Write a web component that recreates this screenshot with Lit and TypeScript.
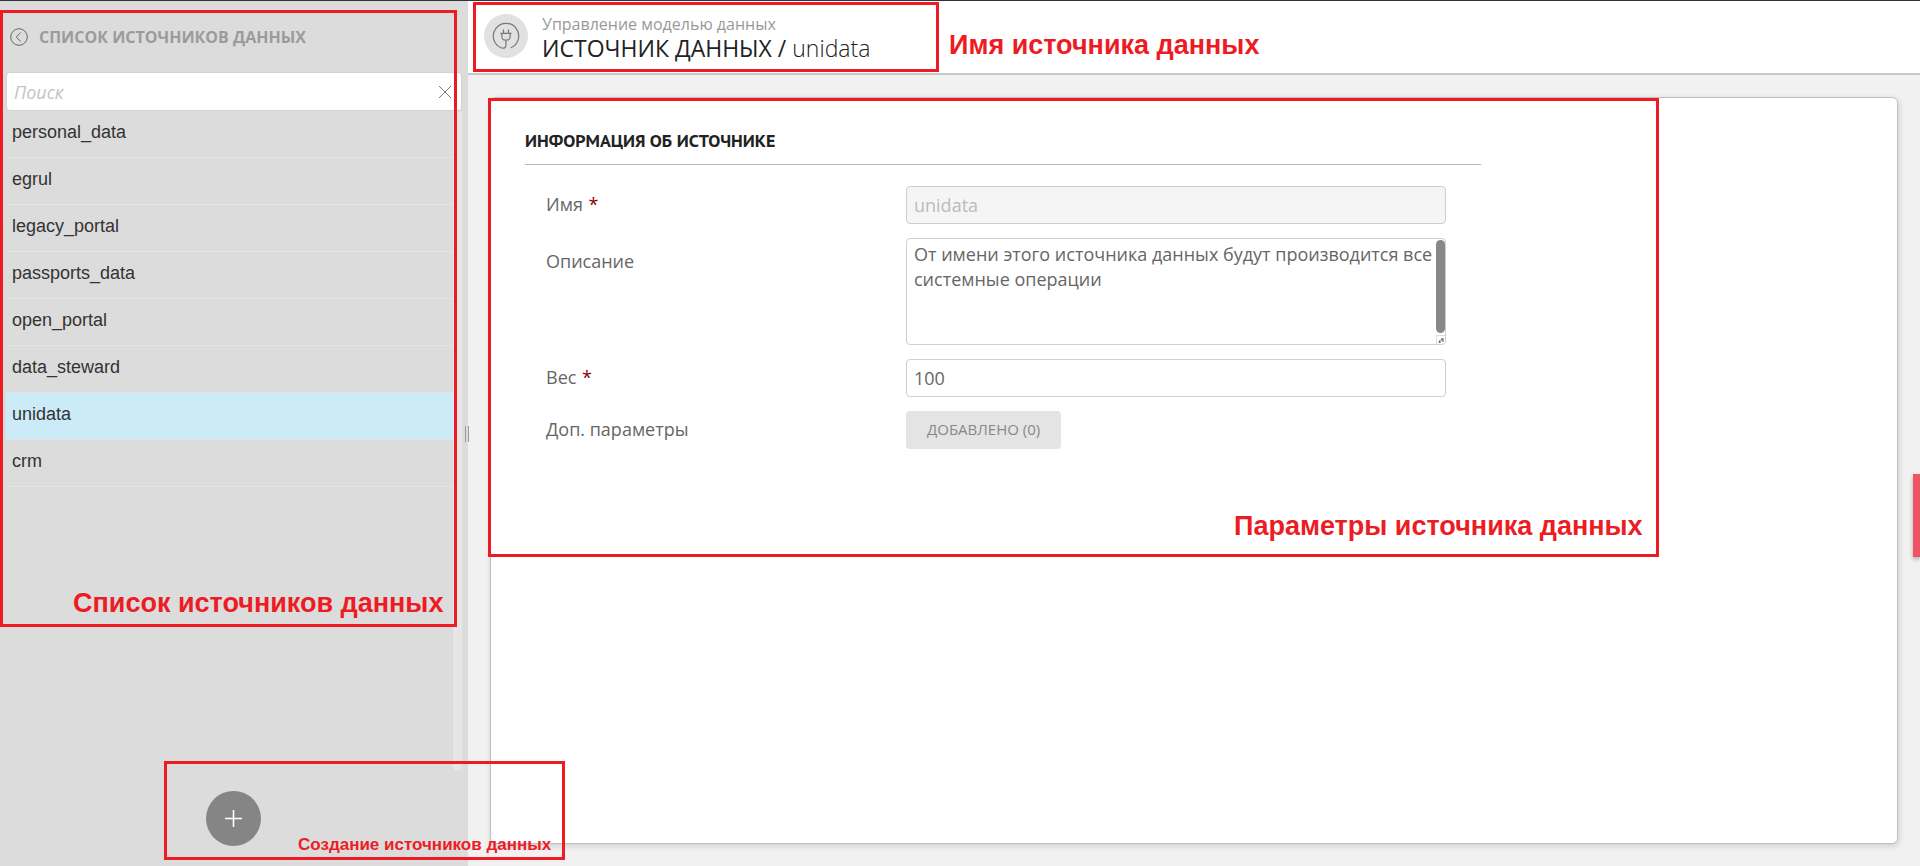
import { LitElement, html, css } from "lit";
import { customElement, state } from "lit/decorators.js";
import { classMap } from "lit/directives/class-map.js";

@customElement("source-list")
class SourceList extends LitElement {
  @state() private selected = "unidata";
  private items = [
    "personal_data",
    "egrul",
    "legacy_portal",
    "passports_data",
    "open_portal",
    "data_steward",
    "unidata",
    "crm",
  ];

  static styles = css`
    :host {
      display: flex;
      flex-direction: column;
      position: relative;
      box-sizing: border-box;
      background: #dcdcdc;
      font-family: "Open Sans", sans-serif;
    }
    button {
      font: inherit;
      border: 0;
      padding: 0;
      background: none;
      cursor: pointer;
    }
    .head {
      display: flex;
      align-items: center;
      gap: 11px;
      height: 71px;
      padding: 0 10px;
      box-sizing: border-box;
    }
    .back {
      display: flex;
      width: 18px;
      height: 18px;
    }
    h2 {
      margin: 0;
      font-size: 16px;
      line-height: 24px;
      font-weight: 700;
      color: #9b9b9b;
    }
    .search {
      display: flex;
      align-items: center;
      height: 39px;
      margin: 0 6px;
      padding: 0 10px 0 7px;
      box-sizing: border-box;
      background: #fff;
      border: 1px solid #d2d2d2;
      border-radius: 4px;
    }
    .search input {
      flex: 1;
      min-width: 0;
      border: 0;
      padding: 0;
      outline: 0;
      background: none;
      font: 18px "Open Sans", sans-serif;
      color: #666;
    }
    .search input::placeholder {
      font-style: italic;
      font-weight: 400;
      color: #c4c4c4;
    }
    .scroll {
      flex: 1;
      display: flex;
      min-height: 0;
      margin: 0 6px;
    }
    ul {
      flex: 1;
      list-style: none;
      margin: 0;
      padding: 0;
    }
    .item {
      display: block;
      width: 100%;
      height: 47px;
      padding: 0 6px 4px;
      box-sizing: border-box;
      border-bottom: 1px solid #e4e4e4;
      text-align: left;
      font-family: "Liberation Sans", sans-serif;
      font-size: 18px;
      line-height: 42px;
      color: #333;
    }
    .item.active {
      background: #cbebf8;
    }
    .track {
      width: 9px;
      border-radius: 5px;
      background: #e6e6e6;
    }
    .foot {
      display: flex;
      justify-content: center;
      padding: 20px 2px 20px 0;
    }
    .add {
      display: flex;
      align-items: center;
      justify-content: center;
      width: 55px;
      height: 55px;
      border-radius: 50%;
      background: #858585;
    }
    .grip {
      position: absolute;
      right: -1px;
      top: 50%;
      width: 2px;
      height: 16px;
      margin-top: -8px;
      border: solid #999;
      border-width: 0 1px;
      z-index: 2;
    }
  `;

  render() {
    return html`
      <div class="head">
        <button class="back" aria-label="Назад">
          <svg width="18" height="18" viewBox="0 0 18 18" fill="none" stroke="#666">
            <circle cx="9" cy="9" r="8.3" />
            <path d="M10.7 4.6 6.2 9l4.5 4.4" />
          </svg>
        </button>
        <h2>СПИСОК ИСТОЧНИКОВ ДАННЫХ</h2>
      </div>
      <div class="search">
        <input type="text" placeholder="Поиск" aria-label="Поиск" />
        <button aria-label="Очистить">
          <svg width="12" height="12" viewBox="0 0 12 12" stroke="#777" display="block">
            <path d="M0 0 12 12M12 0 0 12" />
          </svg>
        </button>
      </div>
      <div class="scroll">
        <ul>
          ${this.items.map(
            (name) => html`<li>
              <button
                class=${classMap({ item: true, active: name === this.selected })}
                @click=${() => (this.selected = name)}
              >
                ${name}
              </button>
            </li>`
          )}
        </ul>
        <div class="track"></div>
      </div>
      <div class="foot">
        <button class="add" aria-label="Добавить">
          <svg width="17" height="17" viewBox="0 0 17 17" stroke="#fff" stroke-width="1.6">
            <path d="M8.5 0v17M0 8.5h17" />
          </svg>
        </button>
      </div>
      <div class="grip"></div>
    `;
  }
}

@customElement("source-form")
class SourceForm extends LitElement {
  static styles = css`
    :host {
      display: block;
      box-sizing: border-box;
      padding: 27px 34px;
      background: #fff;
      border: 1px solid #c0c0c0;
      border-radius: 6px;
      box-shadow: 1px 2px 6px rgba(0, 0, 0, 0.15);
      font-family: "Open Sans", sans-serif;
      font-size: 18px;
      color: #666;
    }
    .section {
      max-width: 956px;
    }
    h3 {
      margin: 0;
      padding: 2px 0 9px;
      border-bottom: 1px solid #b9b9b9;
      font: 700 18px/28px "PT Sans", Roboto, sans-serif;
      color: #222;
    }
    form {
      display: grid;
      grid-template-columns: 2fr 3fr;
      row-gap: 14px;
      padding: 21px 35px 0 21px;
    }
    label {
      line-height: 36px;
    }
    label.tall {
      padding-top: 5px;
    }
    .req {
      margin-left: 1px;
      color: #8b0000;
    }
    input,
    textarea,
    .params {
      box-sizing: border-box;
      margin: 0;
      font: inherit;
      color: inherit;
      border-radius: 4px;
    }
    input,
    textarea {
      display: block;
      width: 100%;
      border: 1px solid #cfcfcf;
      background: #fff;
      outline: 0;
    }
    input {
      height: 38px;
      padding: 0 7px;
    }
    input:disabled {
      background: #f5f5f5;
      color: #bbb;
    }
    .area {
      position: relative;
    }
    textarea {
      height: 107px;
      padding: 3px 9px 3px 7px;
      line-height: 25px;
      overflow: hidden;
      resize: none;
    }
    .thumb {
      position: absolute;
      right: 1px;
      top: 2px;
      bottom: 12px;
      width: 9px;
      border-radius: 5px;
      background: #888;
    }
    .corner {
      position: absolute;
      right: 1px;
      bottom: 1px;
      width: 9px;
      height: 9px;
      display: block;
    }
    .params {
      justify-self: start;
      height: 38px;
      padding: 0 21px 2px;
      border: 0;
      background: #e4e4e4;
      font-size: 15px;
      color: #888;
      cursor: pointer;
    }
  `;

  render() {
    return html`
      <div class="section">
        <h3>ИНФОРМАЦИЯ ОБ ИСТОЧНИКЕ</h3>
        <form>
          <label for="name">Имя <span class="req">*</span></label>
          <input id="name" type="text" value="unidata" disabled />
          <label class="tall" for="desc">Описание</label>
          <div class="area">
            <textarea
              id="desc"
              .value=${"От имени этого источника данных будут производится все системные операции"}
            ></textarea>
            <div class="thumb"></div>
            <svg class="corner" viewBox="0 0 9 9" fill="none">
              <path d="M.5 9V.5H9" stroke="#dcdcdc" />
              <path d="M3 7.5 7 3.5M3.5 5.5v2h1M5 4h2v3" stroke="#555" />
            </svg>
          </div>
          <label for="weight">Вес <span class="req">*</span></label>
          <input id="weight" type="text" value="100" />
          <label for="params">Доп. параметры</label>
          <button id="params" class="params" type="button">ДОБАВЛЕНО (0)</button>
        </form>
      </div>
    `;
  }
}

@customElement("app-root")
class AppRoot extends LitElement {
  static styles = css`
    :host {
      display: flex;
      flex-direction: column;
      position: relative;
      box-sizing: border-box;
      min-height: 100vh;
      overflow: hidden;
      border-top: 1px solid #333;
      background: #f1f1f1;
      font-family: "Open Sans", sans-serif;
    }
    .layout {
      flex: 1;
      display: flex;
    }
    source-list {
      flex: 0 0 468px;
    }
    .main {
      flex: 1;
      display: flex;
      flex-direction: column;
      min-width: 0;
    }
    header {
      display: flex;
      align-items: center;
      gap: 14px;
      height: 74px;
      box-sizing: border-box;
      padding: 0 16px 2px;
      background: #fff;
      border-bottom: 2px solid #c8c8c8;
    }
    .avatar {
      display: flex;
      align-items: center;
      justify-content: center;
      width: 44px;
      height: 44px;
      border-radius: 50%;
      background: #e1e1e1;
    }
    .crumb {
      margin: 0;
      font-size: 16px;
      line-height: 24px;
      color: #999;
    }
    h1 {
      margin: 0;
      font-size: 23px;
      line-height: 25px;
      font-weight: 400;
      color: #222;
    }
    .name {
      font-weight: 300;
    }
    source-form {
      flex: 1;
      margin: 22px;
    }
    .tab {
      position: absolute;
      right: 0;
      top: 473px;
      width: 7px;
      height: 83px;
      padding: 0;
      border: 0;
      background: #ef5466;
      box-shadow: 0 2px 4px rgba(0, 0, 0, 0.3);
    }
    .frame,
    .note {
      position: absolute;
      z-index: 3;
      box-sizing: border-box;
      pointer-events: none;
      color: #ed1c24;
    }
    .frame {
      border: 3px solid #ed1c24;
    }
    .note {
      font: 700 27px/32px "Liberation Sans", sans-serif;
      white-space: nowrap;
    }
    .frame-list {
      left: 0;
      top: 9px;
      width: 457px;
      height: 617px;
    }
    .frame-title {
      left: 473px;
      top: 1px;
      width: 466px;
      height: 70px;
    }
    .frame-form {
      left: 488px;
      top: 97px;
      width: 1171px;
      height: 459px;
    }
    .frame-add {
      left: 164px;
      top: 760px;
      width: 401px;
      height: 99px;
    }
    .note-list {
      left: 73px;
      top: 586px;
    }
    .note-title {
      left: 949px;
      top: 28px;
    }
    .note-form {
      left: 1234px;
      top: 509px;
    }
    .note-add {
      left: 298px;
      top: 833px;
      font-size: 17px;
      line-height: 22px;
    }
  `;

  render() {
    return html`
      <div class="layout">
        <source-list></source-list>
        <div class="main">
          <header>
            <div class="avatar">
              <svg width="28" height="28" viewBox="0 0 28 28" fill="none" stroke="#777" stroke-width="1.2">
                <path d="M18.8 25.8A12.7 12.7 0 1 0 9.2 25.8c2.8 1 4.8.2 4.8-3V18" />
                <path d="M11.5 7.500v3.500M16.500 7.500v3.500M8.500 11.300h11M9.800 11.300v3.200c0 2 1.600 3.500 3.400 3.500h1.600c1.800 0 3.400-1.500 3.400-3.500v-3.200" />
              </svg>
            </div>
            <div>
              <p class="crumb">Управление моделью данных</p>
              <h1>ИСТОЧНИК ДАННЫХ / <span class="name">unidata</span></h1>
            </div>
          </header>
          <source-form></source-form>
        </div>
      </div>
      <button class="tab" aria-label="Уведомления"></button>
      <div class="frame frame-list"></div>
      <div class="frame frame-title"></div>
      <div class="frame frame-form"></div>
      <div class="frame frame-add"></div>
      <div class="note note-list">Список источников данных</div>
      <div class="note note-title">Имя источника данных</div>
      <div class="note note-form">Параметры источника данных</div>
      <div class="note note-add">Создание источников данных</div>
    `;
  }
}
